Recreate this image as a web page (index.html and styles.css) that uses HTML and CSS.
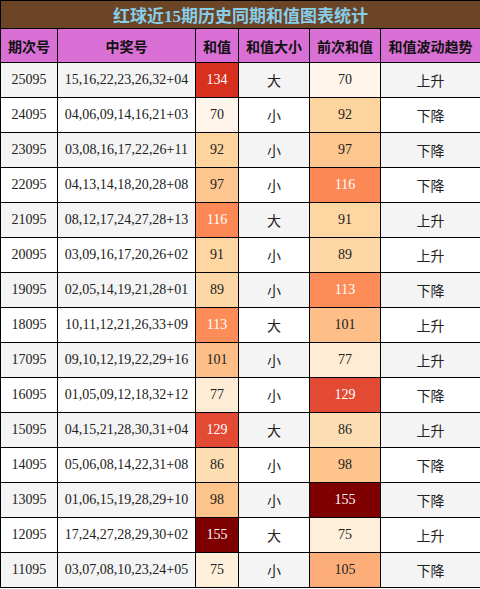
FILE: index.html
```html
<!DOCTYPE html>
<html lang="zh-Hans">
<head>
  <meta charset="UTF-8">
  <meta name="viewport" content="width=device-width, initial-scale=1.0">
  <title>红球近15期历史同期和值图表统计</title>
  <link rel="stylesheet" href="styles.css">
</head>
<body>
  <table class="stats">
    <colgroup>
      <col class="c-period">
      <col class="c-nums">
      <col class="c-sum">
      <col class="c-size">
      <col class="c-prev">
      <col class="c-trend">
    </colgroup>
    <thead>
      <tr class="title-row"><th colspan="6">红球近15期历史同期和值图表统计</th></tr>
      <tr class="head-row">
        <th>期次号</th><th>中奖号</th><th>和值</th><th>和值大小</th><th>前次和值</th><th>和值波动趋势</th>
      </tr>
    </thead>
    <tbody>
      <!-- 和值格子的底色按数值取色 -->
      <tr><td>25095</td><td>15,16,22,23,26,32+04</td><td class="v" style="background:#d7301f;color:#fff">134</td><td class="cn">大</td><td class="v" style="background:#fff5eb">70</td><td class="cn">上升</td></tr>
      <tr><td>24095</td><td>04,06,09,14,16,21+03</td><td class="v" style="background:#fff5eb">70</td><td class="cn">小</td><td class="v" style="background:#fdd49e">92</td><td class="cn">下降</td></tr>
      <tr><td>23095</td><td>03,08,16,17,22,26+11</td><td class="v" style="background:#fdd49e">92</td><td class="cn">小</td><td class="v" style="background:#fdc68f">97</td><td class="cn">下降</td></tr>
      <tr><td>22095</td><td>04,13,14,18,20,28+08</td><td class="v" style="background:#fdc68f">97</td><td class="cn">小</td><td class="v" style="background:#fc8856;color:#fff">116</td><td class="cn">下降</td></tr>
      <tr><td>21095</td><td>08,12,17,24,27,28+13</td><td class="v" style="background:#fc8856;color:#fff">116</td><td class="cn">大</td><td class="v" style="background:#fdd6a2">91</td><td class="cn">上升</td></tr>
      <tr><td>20095</td><td>03,09,16,17,20,26+02</td><td class="v" style="background:#fdd6a2">91</td><td class="cn">小</td><td class="v" style="background:#fdd8a6">89</td><td class="cn">上升</td></tr>
      <tr><td>19095</td><td>02,05,14,19,21,28+01</td><td class="v" style="background:#fdd8a6">89</td><td class="cn">小</td><td class="v" style="background:#fc8d59;color:#fff">113</td><td class="cn">下降</td></tr>
      <tr><td>18095</td><td>10,11,12,21,26,33+09</td><td class="v" style="background:#fc8d59;color:#fff">113</td><td class="cn">大</td><td class="v" style="background:#fdbe88">101</td><td class="cn">上升</td></tr>
      <tr><td>17095</td><td>09,10,12,19,22,29+16</td><td class="v" style="background:#fdbe88">101</td><td class="cn">小</td><td class="v" style="background:#feecd5">77</td><td class="cn">上升</td></tr>
      <tr><td>16095</td><td>01,05,09,12,18,32+12</td><td class="v" style="background:#feecd5">77</td><td class="cn">小</td><td class="v" style="background:#e34a33;color:#fff">129</td><td class="cn">下降</td></tr>
      <tr><td>15095</td><td>04,15,21,28,30,31+04</td><td class="v" style="background:#e34a33;color:#fff">129</td><td class="cn">大</td><td class="v" style="background:#fddeb2">86</td><td class="cn">上升</td></tr>
      <tr><td>14095</td><td>05,06,08,14,22,31+08</td><td class="v" style="background:#fddeb2">86</td><td class="cn">小</td><td class="v" style="background:#fdc48c">98</td><td class="cn">下降</td></tr>
      <tr><td>13095</td><td>01,06,15,19,28,29+10</td><td class="v" style="background:#fdc48c">98</td><td class="cn">小</td><td class="v" style="background:#7f0000;color:#fff">155</td><td class="cn">下降</td></tr>
      <tr><td>12095</td><td>17,24,27,28,29,30+02</td><td class="v" style="background:#7f0000;color:#fff">155</td><td class="cn">大</td><td class="v" style="background:#feefdb">75</td><td class="cn">上升</td></tr>
      <tr><td>11095</td><td>03,07,08,10,23,24+05</td><td class="v" style="background:#feefdb">75</td><td class="cn">小</td><td class="v" style="background:#fdae78">105</td><td class="cn">下降</td></tr>
    </tbody>
  </table>
</body>
</html>
```

FILE: styles.css
```css
body {
  margin: 0;
  padding: 0;
  background: #fff;
  font-family: "Liberation Serif", "Noto Sans CJK SC", serif;
}
.stats {
  width: 480px;
  border-collapse: collapse;
  table-layout: fixed;
  font-size: 14px;
  color: #222;
}
.c-period { width: 57px; }
.c-nums { width: 138px; }
.c-sum { width: 43px; }
.c-size { width: 71px; }
.c-prev { width: 71px; }
.c-trend { width: 100px; }
.stats th, .stats td {
  border: 1px solid #000;
  text-align: center;
  padding: 0;
  white-space: nowrap;
}
.title-row th {
  height: 27px;
  background: #6b4526;
  color: #87ceeb;
  font-size: 17px;
  font-weight: bold;
}
.head-row th {
  height: 33px;
  background: #da70d6;
  color: #111;
  font-size: 14px;
  font-weight: bold;
  font-family: "Noto Sans CJK SC", sans-serif;
}
.stats tbody td { height: 34px; }
.stats tbody tr:nth-child(odd) { background: #f4f4f4; }
.stats tbody tr:nth-child(even) { background: #fff; }
.stats td.cn {
  font-family: "Noto Sans CJK SC", sans-serif;
  font-size: 14px;
}
```
